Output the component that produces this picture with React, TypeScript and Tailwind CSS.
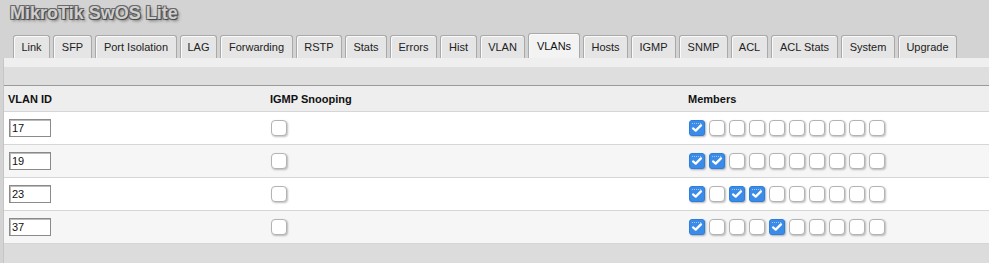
import React from "react";

const tabs = [
  { name: "Link", w: "w-[37px]" },
  { name: "SFP", w: "w-[39px]" },
  { name: "Port Isolation", w: "w-[82px]" },
  { name: "LAG", w: "w-[37px]" },
  { name: "Forwarding", w: "w-[73px]" },
  { name: "RSTP", w: "w-[46px]" },
  { name: "Stats", w: "w-[42px]" },
  { name: "Errors", w: "w-[47px]" },
  { name: "Hist", w: "w-[37px]" },
  { name: "VLAN", w: "w-[45px]" },
  { name: "VLANs", w: "w-[52px]" },
  { name: "Hosts", w: "w-[45px]" },
  { name: "IGMP", w: "w-[45px]" },
  { name: "SNMP", w: "w-[49px]" },
  { name: "ACL", w: "w-[37px]" },
  { name: "ACL Stats", w: "w-[67px]" },
  { name: "System", w: "w-[54px]" },
  { name: "Upgrade", w: "w-[59px]" },
];

const vlans = [
  { id: "17", igmp: false, members: [0] },
  { id: "19", igmp: false, members: [0, 1] },
  { id: "23", igmp: false, members: [0, 2, 3] },
  { id: "37", igmp: false, members: [0, 4] },
];

const Check: React.FC<{ on: boolean }> = ({ on }) =>
  on ? (
    <div className="relative w-4 h-4 rounded-[3px] bg-[#3b8ce8] border border-[#2f7ed8] shadow-[1px_1px_2px_rgba(0,0,0,0.3)]">
      <div className="absolute left-[2px] right-[3px] top-[2px] border-t border-dotted border-[#9cc6f5]" />
      <svg viewBox="0 0 16 16" className="absolute inset-0 w-full h-full">
        <polyline
          points="3.5,8.5 6.5,11 12.5,5"
          fill="none"
          stroke="white"
          strokeWidth="2.6"
          strokeLinecap="round"
          strokeLinejoin="round"
        />
      </svg>
    </div>
  ) : (
    <div className="w-4 h-4 rounded-[4px] bg-white border border-[#b3b3b3] shadow-[1px_1px_2px_rgba(0,0,0,0.25)]" />
  );

export default function App() {
  return (
    <div className="min-h-screen w-full flex flex-col bg-[#d3d3d3] font-['Liberation_Sans',Arial,sans-serif] text-[#222]">
      {/* Title */}
      <div className="h-[33px] pl-[10px] pt-[3px]">
        <div className="text-[18px] leading-[20px] font-bold text-[#cfcfcf] [text-shadow:1px_1px_0_#4a4a4a,-1px_-1px_0_#6a6a6a,1px_-1px_0_#6a6a6a,-1px_1px_0_#6a6a6a,2px_2px_3px_rgba(0,0,0,0.45)]">
          MikroTik SwOS Lite
        </div>
      </div>

      {/* Tabs */}
      <div className="h-[25px] flex items-end gap-[3px] pl-[13px]">
        {tabs.map((t) => {
          const active = t.name === "VLANs";
          return (
            <div
              key={t.name}
              className={`${t.w} ${
                active
                  ? "h-[25px] bg-[#f3f3f3] text-[#111]"
                  : "h-[23px] bg-[#e5e5e5] text-[#222]"
              } flex items-center justify-center pt-[1px] text-[11px] rounded-t-[3px] border border-b-0 border-[#a9a9a9] shadow-[inset_1px_1px_0_#fafafa]`}
            >
              {t.name}
            </div>
          );
        })}
      </div>

      {/* Panel */}
      <div className="flex-1 ml-[3px] flex flex-col bg-[#dcdcdc] border-l border-[#c6c6c6]">
        <div className="h-[9px] bg-[#efefef]" />
        <div className="h-[18px] bg-[#dedede]" />
        <div className="border-t border-[#9a9a9a]">
          <div className="grid grid-cols-[262px_418px_1fr] h-[26px] items-center bg-[#eeeeee] border-b border-[#d6d6d6] text-[11px] font-bold text-[#111]">
            <div className="pl-[4px] pt-[2px]">VLAN ID</div>
            <div className="pl-[4px] pt-[2px]">IGMP Snooping</div>
            <div className="pl-[4px] pt-[2px]">Members</div>
          </div>
          {vlans.map((v, i) => (
            <div
              key={v.id}
              className={`grid grid-cols-[262px_418px_1fr] h-[33px] items-center border-b border-[#d6d6d6] ${
                i % 2 === 0 ? "bg-white" : "bg-[#f6f6f6]"
              }`}
            >
              <div className="pl-[5px]">
                <div className="w-[42px] h-[18px] bg-white border border-[#8a8a8a] shadow-[inset_1px_1px_0_#bbb] text-[11px] leading-[16px] pl-[2px] text-[#111]">
                  {v.id}
                </div>
              </div>
              <div className="pl-[5px]">
                <Check on={v.igmp} />
              </div>
              <div className="pl-[5px] flex gap-1">
                {Array.from({ length: 10 }).map((_, p) => (
                  <Check key={p} on={v.members.includes(p)} />
                ))}
              </div>
            </div>
          ))}
        </div>
      </div>
    </div>
  );
}
